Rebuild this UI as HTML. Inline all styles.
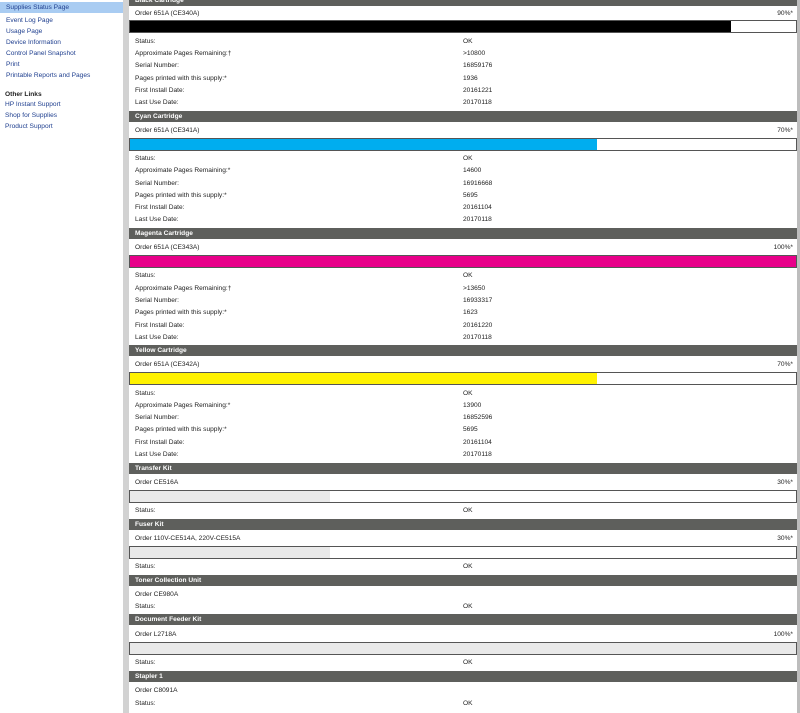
<!DOCTYPE html>
<html><head><meta charset="utf-8"><style>
body{margin:0;width:800px;height:713px;overflow:hidden;background:#fff;font-family:"Liberation Sans",Arial,sans-serif;font-size:6.6px;color:#222;position:relative}
div{position:absolute;white-space:nowrap}
.sep{left:123px;top:0;width:6px;height:713px;background:#d2d2d2}
.rsep{left:797px;top:0;width:3px;height:713px;background:#bdbdbd}
.nav{left:6px;color:#1f3f8f;line-height:10px;margin-top:2px}
.sel{left:0;top:2px;width:123px;height:11px;background:#a9ccf2}
.h{left:129px;width:668px;height:11px;background:#5e5f5c;color:#fff;font-weight:bold;line-height:11px;text-indent:6px}
.l{left:135px;line-height:10px;margin-top:1px}
.v{left:463px;line-height:10px;margin-top:1px}
.p{right:7px;line-height:10px;margin-top:1px}
.bar{left:129px;width:666px;height:11px;border:1px solid #555;background:#fff}
.bar i{position:absolute;left:0;top:0;height:11px;display:block}
</style></head><body>
<div class="sel"></div>
<div class="nav" style="top:3px;margin-top:0">Supplies Status Page</div>
<div class="nav" style="top:14px">Event Log Page</div>
<div class="nav" style="top:25px">Usage Page</div>
<div class="nav" style="top:36px">Device Information</div>
<div class="nav" style="top:47px">Control Panel Snapshot</div>
<div class="nav" style="top:58px">Print</div>
<div class="nav" style="top:69px">Printable Reports and Pages</div>
<div class="nav" style="top:88px;left:5px;color:#222;font-weight:bold">Other Links</div>
<div class="nav" style="top:98px;left:5px">HP Instant Support</div>
<div class="nav" style="top:109px;left:5px">Shop for Supplies</div>
<div class="nav" style="top:120px;left:5px">Product Support</div>
<div class="sep"></div><div class="rsep"></div>

<div class="h" style="top:-5px">Black Cartridge</div>
<div class="l" style="top:8px">Order 651A (CE340A)</div><div class="p" style="top:8px">90%*</div>
<div class="bar" style="top:20px"><i style="width:601px;background:#000"></i></div>
<div class="l" style="top:36px">Status:</div><div class="v" style="top:36px">OK</div>
<div class="l" style="top:48px">Approximate Pages Remaining:†</div><div class="v" style="top:48px">&gt;10800</div>
<div class="l" style="top:60px">Serial Number:</div><div class="v" style="top:60px">16859176</div>
<div class="l" style="top:73px">Pages printed with this supply:*</div><div class="v" style="top:73px">1936</div>
<div class="l" style="top:85px">First Install Date:</div><div class="v" style="top:85px">20161221</div>
<div class="l" style="top:97px">Last Use Date:</div><div class="v" style="top:97px">20170118</div>

<div class="h" style="top:111px">Cyan Cartridge</div>
<div class="l" style="top:125px">Order 651A (CE341A)</div><div class="p" style="top:125px">70%*</div>
<div class="bar" style="top:138px"><i style="width:467px;background:#00adef"></i></div>
<div class="l" style="top:153px">Status:</div><div class="v" style="top:153px">OK</div>
<div class="l" style="top:165px">Approximate Pages Remaining:*</div><div class="v" style="top:165px">14600</div>
<div class="l" style="top:178px">Serial Number:</div><div class="v" style="top:178px">16916668</div>
<div class="l" style="top:190px">Pages printed with this supply:*</div><div class="v" style="top:190px">5695</div>
<div class="l" style="top:202px">First Install Date:</div><div class="v" style="top:202px">20161104</div>
<div class="l" style="top:214px">Last Use Date:</div><div class="v" style="top:214px">20170118</div>

<div class="h" style="top:228px">Magenta Cartridge</div>
<div class="l" style="top:242px">Order 651A (CE343A)</div><div class="p" style="top:242px">100%*</div>
<div class="bar" style="top:255px"><i style="width:666px;background:#e8008a"></i></div>
<div class="l" style="top:270px">Status:</div><div class="v" style="top:270px">OK</div>
<div class="l" style="top:283px">Approximate Pages Remaining:†</div><div class="v" style="top:283px">&gt;13650</div>
<div class="l" style="top:295px">Serial Number:</div><div class="v" style="top:295px">16933317</div>
<div class="l" style="top:307px">Pages printed with this supply:*</div><div class="v" style="top:307px">1623</div>
<div class="l" style="top:320px">First Install Date:</div><div class="v" style="top:320px">20161220</div>
<div class="l" style="top:332px">Last Use Date:</div><div class="v" style="top:332px">20170118</div>

<div class="h" style="top:345px">Yellow Cartridge</div>
<div class="l" style="top:359px">Order 651A (CE342A)</div><div class="p" style="top:359px">70%*</div>
<div class="bar" style="top:372px"><i style="width:467px;background:#fff200"></i></div>
<div class="l" style="top:388px">Status:</div><div class="v" style="top:388px">OK</div>
<div class="l" style="top:400px">Approximate Pages Remaining:*</div><div class="v" style="top:400px">13900</div>
<div class="l" style="top:412px">Serial Number:</div><div class="v" style="top:412px">16852596</div>
<div class="l" style="top:424px">Pages printed with this supply:*</div><div class="v" style="top:424px">5695</div>
<div class="l" style="top:437px">First Install Date:</div><div class="v" style="top:437px">20161104</div>
<div class="l" style="top:449px">Last Use Date:</div><div class="v" style="top:449px">20170118</div>

<div class="h" style="top:463px">Transfer Kit</div>
<div class="l" style="top:477px">Order CE516A</div><div class="p" style="top:477px">30%*</div>
<div class="bar" style="top:490px"><i style="width:200px;background:#e9e9e9"></i></div>
<div class="l" style="top:505px">Status:</div><div class="v" style="top:505px">OK</div>

<div class="h" style="top:519px">Fuser Kit</div>
<div class="l" style="top:533px">Order 110V-CE514A, 220V-CE515A</div><div class="p" style="top:533px">30%*</div>
<div class="bar" style="top:546px"><i style="width:200px;background:#e9e9e9"></i></div>
<div class="l" style="top:561px">Status:</div><div class="v" style="top:561px">OK</div>

<div class="h" style="top:575px">Toner Collection Unit</div>
<div class="l" style="top:589px">Order CE980A</div>
<div class="l" style="top:601px">Status:</div><div class="v" style="top:601px">OK</div>

<div class="h" style="top:614px">Document Feeder Kit</div>
<div class="l" style="top:629px">Order L2718A</div><div class="p" style="top:629px">100%*</div>
<div class="bar" style="top:642px"><i style="width:666px;background:#e9e9e9"></i></div>
<div class="l" style="top:657px">Status:</div><div class="v" style="top:657px">OK</div>

<div class="h" style="top:671px">Stapler 1</div>
<div class="l" style="top:685px">Order C8091A</div>
<div class="l" style="top:698px">Status:</div><div class="v" style="top:698px">OK</div>
</body></html>
